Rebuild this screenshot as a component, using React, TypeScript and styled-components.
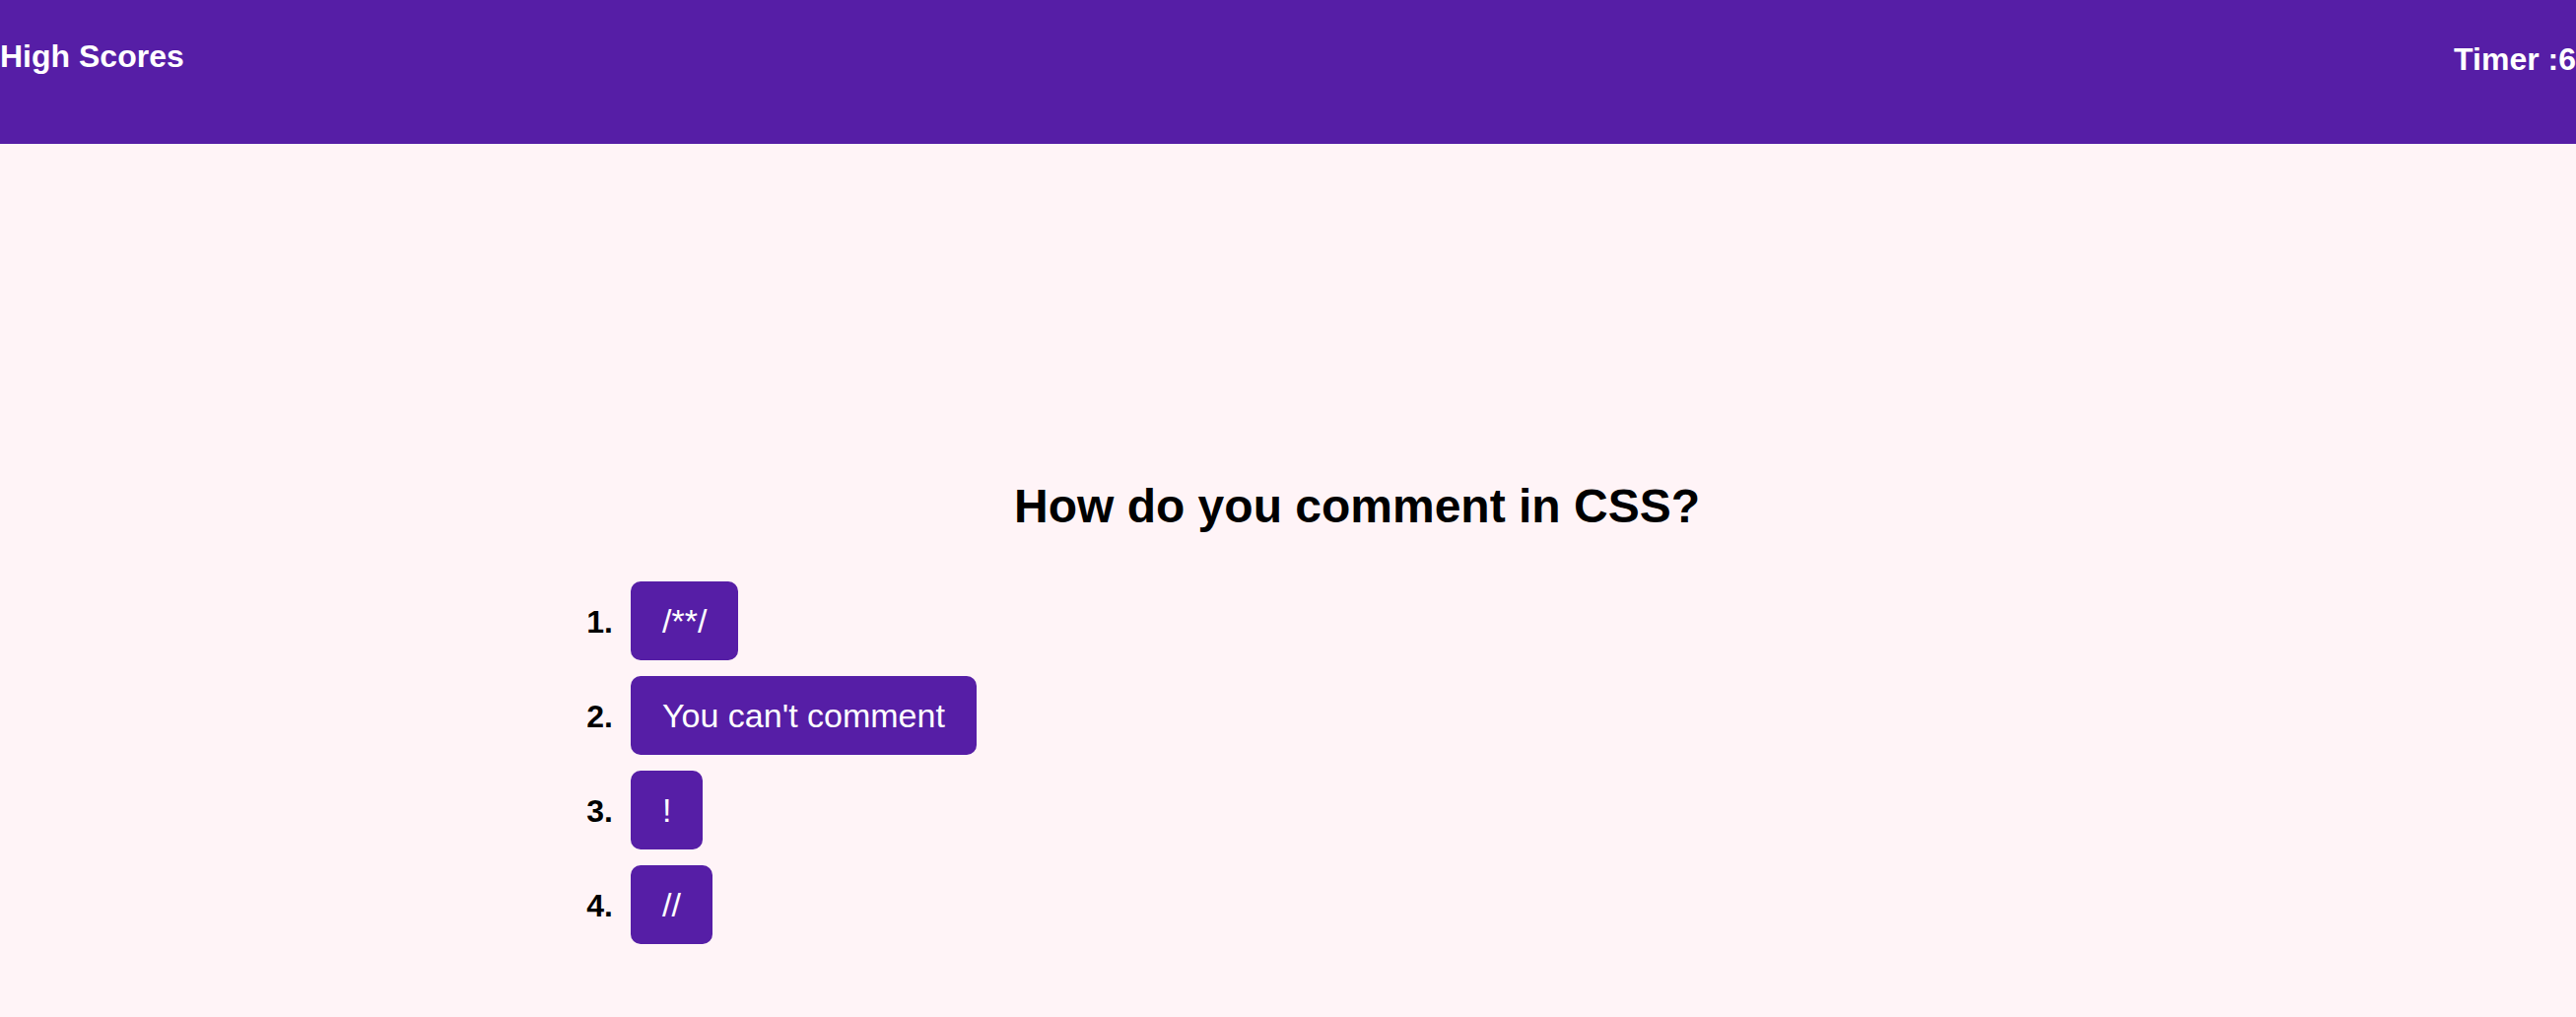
import React from "react";
import styled, { createGlobalStyle } from "styled-components";

const GlobalStyle = createGlobalStyle`
  html, body {
    margin: 0;
    padding: 0;
    background: #fff4f7;
    min-height: 100%;
  }
  body {
    font-family: "Liberation Sans", Arial, Helvetica, sans-serif;
    color: #000;
  }
`;

const Header = styled.header`
  height: 146px;
  background: #561ea6;
  display: flex;
  justify-content: space-between;
  align-items: flex-start;
  color: #fff;
  font-weight: bold;
  font-size: 32px;
  line-height: 36.8px;
`;

const HeaderItem = styled.div<{ $top: number }>`
  margin-top: ${(p) => p.$top}px;
  white-space: nowrap;
`;

const Quiz = styled.main`
  margin: 0 420px 0 560px;
  padding-top: 340px;
`;

const Title = styled.h2`
  margin: 0 0 49px 0;
  text-align: center;
  font-size: 48px;
  line-height: 55.2px;
  font-weight: bold;
`;

const Answers = styled.ol`
  list-style: none;
  margin: 0;
  padding: 0;
  display: flex;
  flex-direction: column;
  gap: 16px;
`;

const Row = styled.li`
  display: flex;
  align-items: baseline;
  gap: 18px;
`;

const Number = styled.span`
  width: 62px;
  text-align: right;
  font-size: 32px;
  font-weight: bold;
  line-height: 36.8px;
`;

const AnswerButton = styled.button`
  font-family: "Liberation Sans", Arial, Helvetica, sans-serif;
  font-size: 34px;
  line-height: 40px;
  padding: 20px 32px;
  border: none;
  border-radius: 10px;
  background: #561ea6;
  color: #fff;
  cursor: pointer;
  white-space: nowrap;
`;

const answers = ["/**/", "You can't comment", "!", "//"];

export default function App() {
  return (
    <>
      <GlobalStyle />
      <Header>
        <HeaderItem $top={39}>High Scores</HeaderItem>
        <HeaderItem $top={42}>Timer :6</HeaderItem>
      </Header>
      <Quiz>
        <Title>How do you comment in CSS?</Title>
        <Answers>
          {answers.map((a, i) => (
            <Row key={a}>
              <Number>{i + 1}.</Number>
              <AnswerButton>{a}</AnswerButton>
            </Row>
          ))}
        </Answers>
      </Quiz>
    </>
  );
}
